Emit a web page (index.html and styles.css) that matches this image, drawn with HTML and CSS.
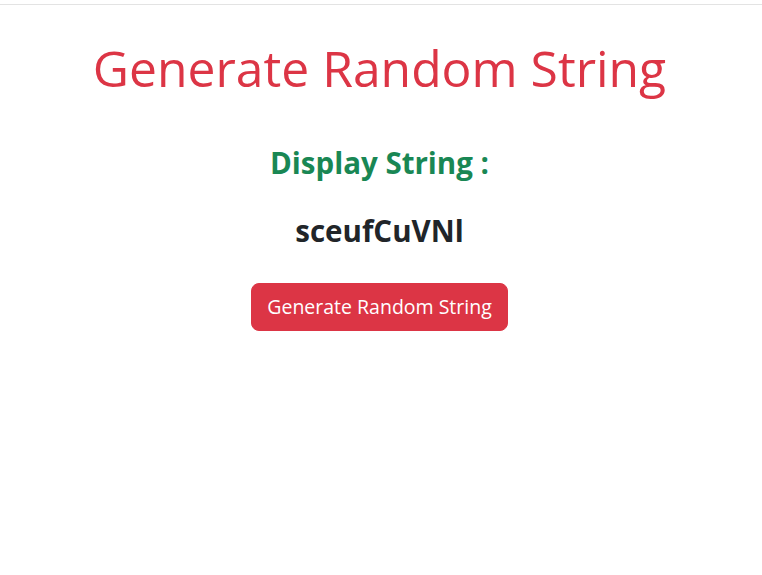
FILE: index.html
```html
<!DOCTYPE html>
<html>
<head>
<meta charset="utf-8">
<link rel="stylesheet" href="styles.css">
</head>
<body>
<div class="topline"></div>
<main class="app">
  <h1 class="title">Generate Random String</h1>
  <h3 class="label">Display String :</h3>
  <h3 class="value">sceufCuVNl</h3>
  <button class="btn">Generate Random String</button>
</main>
</body>
</html>
```
FILE: styles.css
```css
html, body {
  margin: 0;
  padding: 0;
  background: #fff;
}
body {
  font-family: "Open Sans", "Noto Sans", sans-serif;
  color: #212529;
}
.topline {
  margin-top: 4px;
  border-top: 1px solid #e3e3e3;
}
.app {
  display: flex;
  flex-direction: column;
  align-items: center;
  padding-right: 3px;
}
.title {
  margin: 33px 0 0;
  font-size: 49.8px;
  font-weight: 500;
  line-height: 60px;
  color: #dc3545;
}
.label {
  margin: 47px 0 0;
  font-size: 29.5px;
  font-weight: 700;
  line-height: 35px;
  color: #198754;
}
.value {
  margin: 33px 0 0;
  font-size: 29.5px;
  font-weight: 700;
  line-height: 35px;
  color: #212529;
}
.btn {
  margin-top: 35px;
  font-family: inherit;
  font-size: 19.5px;
  font-weight: 500;
  line-height: 30px;
  padding: 8px 15.5px;
  border: 1px solid #dc3545;
  background: #dc3545;
  color: #fff;
  border-radius: 8px;
}
```
